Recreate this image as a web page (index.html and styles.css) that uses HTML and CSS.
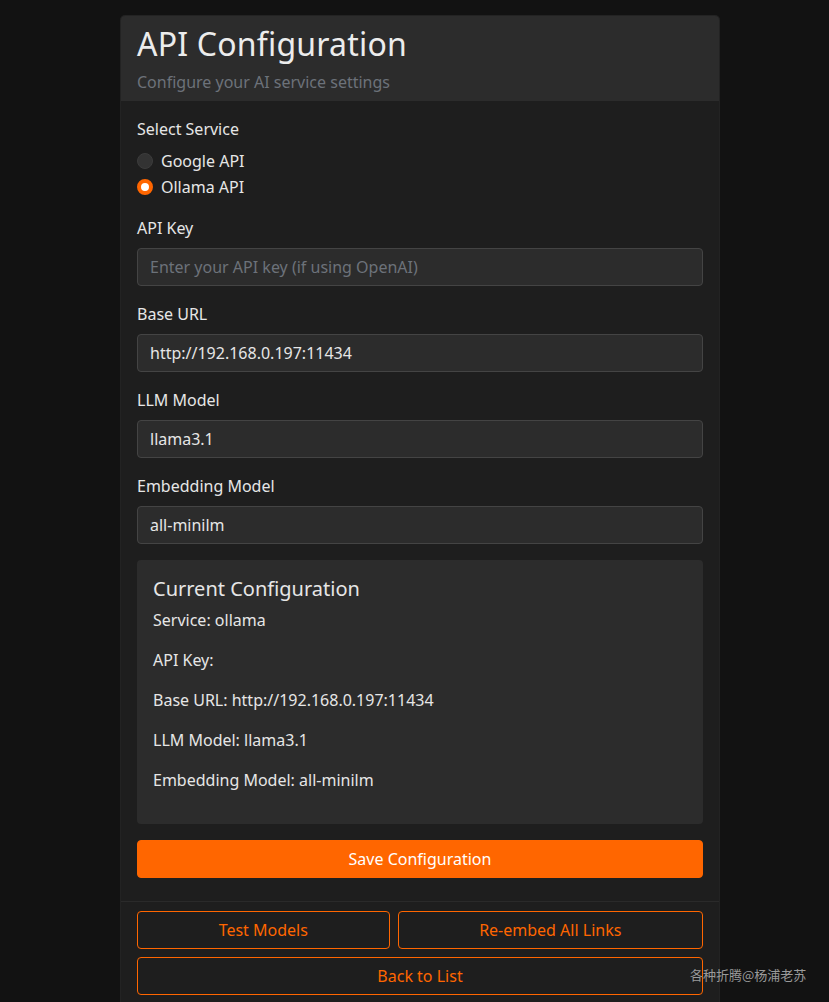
FILE: index.html
```html
<!DOCTYPE html>
<html lang="en">
<head>
<meta charset="utf-8">
<title>API Configuration</title>
<link rel="stylesheet" href="styles.css">
</head>
<body>
<div class="card">
  <header class="card-header">
    <h1 class="title">API Configuration</h1>
    <p class="subtitle">Configure your AI service settings</p>
  </header>
  <section class="card-body">
    <div class="field">
      <div class="label label-tight">Select Service</div>
      <label class="radio"><span class="dot"></span>Google API</label>
      <label class="radio"><span class="dot dot-on"></span>Ollama API</label>
    </div>
    <div class="field">
      <div class="label">API Key</div>
      <div class="input placeholder">Enter your API key (if using OpenAI)</div>
    </div>
    <div class="field">
      <div class="label">Base URL</div>
      <div class="input">http://192.168.0.197:11434</div>
    </div>
    <div class="field">
      <div class="label">LLM Model</div>
      <div class="input">llama3.1</div>
    </div>
    <div class="field">
      <div class="label">Embedding Model</div>
      <div class="input">all-minilm</div>
    </div>
    <div class="current">
      <h3 class="current-title">Current Configuration</h3>
      <p class="line">Service: ollama</p>
      <p class="line">API Key: </p>
      <p class="line">Base URL: http://192.168.0.197:11434</p>
      <p class="line">LLM Model: llama3.1</p>
      <p class="line">Embedding Model: all-minilm</p>
    </div>
    <button class="btn btn-primary">Save Configuration</button>
  </section>
  <footer class="card-footer">
    <div class="btn-row">
      <button class="btn btn-outline">Test Models</button>
      <button class="btn btn-outline">Re-embed All Links</button>
    </div>
    <button class="btn btn-outline btn-full">Back to List</button>
  </footer>
</div>
<div class="watermark">各种折腾@杨浦老苏</div>
</body>
</html>
```
FILE: styles.css
```css
html, body {
  margin: 0;
  padding: 0;
  background: #121212;
}
body {
  font-family: "Noto Sans", "Open Sans", "Noto Sans CJK SC", sans-serif;
  color: #e6e6e6;
  font-size: 16px;
  line-height: 24px;
  padding-top: 16px;
  height: 1002px;
  box-sizing: border-box;
  overflow: hidden;
}
.card {
  width: 598px;
  margin: 0 0 0 121px;
  background: #1e1e1e;
  border-radius: 4px 4px 0 0;
  box-shadow: 0 0 0 1px #232323;
}
.card-header {
  background: #2c2c2c;
  padding: 6px 16px 7px;
  border-radius: 4px 4px 0 0;
}
.title {
  margin: 0;
  font-size: 32px;
  font-weight: 400;
  line-height: 44px;
  color: #ececec;
  letter-spacing: 0.2px;
}
.subtitle {
  margin: 4px 0 0;
  font-size: 16px;
  color: #6c727a;
}
.card-body {
  padding: 16px 16px 23px;
}
.field {
  margin-bottom: 16px;
}
.label {
  margin-bottom: 8px;
}
.label-tight {
  margin-bottom: 7px;
}
.radio {
  display: flex;
  align-items: center;
  gap: 8px;
  height: 26px;
}
.dot {
  width: 16px;
  height: 16px;
  border-radius: 50%;
  background: #333;
  box-sizing: border-box;
  border: 1px solid #3c3c3c;
}
.dot-on {
  background: #fff;
  border: 4px solid #ff6600;
}
.input {
  height: 38px;
  box-sizing: border-box;
  background: #2c2c2c;
  border: 1px solid #444;
  border-radius: 4px;
  padding: 6px 12px;
  color: #e6e6e6;
}
.placeholder {
  color: #6c727a;
}
.current {
  background: #2c2c2c;
  border-radius: 4px;
  padding: 14px 16px 16px;
  margin-bottom: 16px;
}
.current-title {
  margin: 0 0 4px;
  font-size: 20px;
  font-weight: 400;
  line-height: 30px;
}
.line {
  margin: 0 0 16px;
}
.btn {
  font-family: inherit;
  font-size: 16px;
  line-height: 24px;
  height: 38px;
  border-radius: 4px;
  cursor: pointer;
  box-sizing: border-box;
  padding: 6px 12px;
}
.btn-primary {
  display: block;
  width: 100%;
  background: #ff6600;
  border: 1px solid #ff6600;
  color: #fff;
}
.card-footer {
  border-top: 1px solid #2a2a2a;
  padding: 9px 16px 8px;
  display: flex;
  flex-direction: column;
  gap: 8px;
}
.btn-row {
  display: flex;
  gap: 8px;
}
.btn-outline {
  background: transparent;
  border: 1px solid #ff6600;
  color: #ff6600;
  flex: 1 1 auto;
}
.btn-full {
  width: 100%;
}
.watermark {
  position: absolute;
  left: 690px;
  top: 963px;
  font-size: 13px;
  color: #9a9a9a;
  font-family: "Noto Sans CJK SC", sans-serif;
}
```
